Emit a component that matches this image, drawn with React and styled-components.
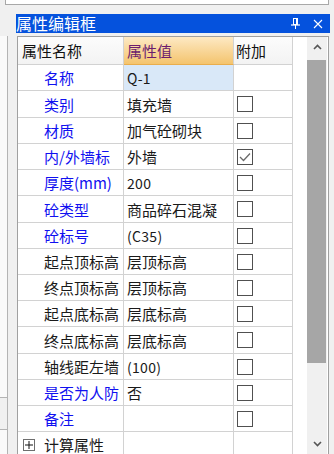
import React from 'react';
import styled, { createGlobalStyle } from 'styled-components';

const Global = createGlobalStyle`
  html, body { margin: 0; padding: 0; background: #f0f0f0; }
  body { font-family: "Noto Sans CJK SC", "Noto Sans", sans-serif; }
`;

const Page = styled.div`
  width: 334px;
  height: 454px;
  overflow: hidden;
  background: #f0f0f0;
  display: flex;
  flex-direction: column;
`;

const TopStrip = styled.div`
  margin-left: 5px;
  width: 322px;
  height: 4px;
  background: #fff;
  border: 1px solid #a8a8a8;
  border-top: none;
  flex: none;
`;

const TitleBar = styled.div`
  margin: 9px 0 0 16px;
  width: 314px;
  height: 19px;
  background: #0552dd;
  color: #fff;
  display: flex;
  align-items: center;
  flex: none;
`;

const TitleText = styled.span`
  font-size: 16px;
  line-height: 19px;
  flex: 1;
`;

const TitleIcon = styled.svg`
  display: block;
  margin-right: ${p => p.$mr}px;
`;

const ContentRow = styled.div`
  margin-top: 3px;
  display: flex;
  flex: none;
`;

const LeftStub = styled.div`
  width: 7px;
  height: 418px;
  border-right: 1px solid #b4b4b4;
  display: flex;
  flex-direction: column;
`;

const StubPart = styled.div`
  height: ${p => p.$h}px;
  background: ${p => (p.$grey ? '#f0f0f0' : '#fafafa')};
  border-bottom: ${p => (p.$line ? '1px solid #b4b4b4' : 'none')};
  flex: none;
`;

const GridBox = styled.div`
  margin-left: 9px;
  width: 310px;
  height: 417px;
  border: 1px solid #a0a0a0;
  border-bottom: none;
  background: #fff;
  display: flex;
  overflow: hidden;
`;

const Table = styled.div`
  width: 275px;
  display: grid;
  grid-template-columns: 106px 110px 59px;
  align-content: start;
  flex: none;
`;

const Filler = styled.div`
  width: 14px;
  flex: none;
`;

const Cell = styled.div`
  height: ${p => p.$h}px;
  box-sizing: border-box;
  border-right: 1px solid #d2d2d2;
  border-bottom: 1px solid #d2d2d2;
  display: flex;
  align-items: center;
  overflow: hidden;
  white-space: nowrap;
  font-size: 15px;
  background: ${p => (p.$sel ? '#d9e8f8' : '#fff')};
`;

const HeadCell = styled(Cell)`
  background: ${p => (p.$active ? 'linear-gradient(#fde9c4, #f4c46e)' : 'linear-gradient(#fcfcfc, #f3f3f3)')};
  border-bottom: 1px solid ${p => (p.$active ? '#e9ad4d' : '#d2d2d2')};
  color: ${p => (p.$active ? '#6c1d6e' : '#111')};
  padding-left: ${p => p.$pl}px;
`;

const NameCell = styled(Cell)`
  padding-left: ${p => (p.$group ? 5 : 26)}px;
  color: ${p => (p.$blue ? '#1010f0' : '#1a1a1a')};
`;

const ValueCell = styled(Cell)`
  padding-left: 3px;
  color: #1a1a1a;
  font-size: ${p => (p.$latin ? 14 : 15)}px;
  letter-spacing: ${p => (p.$latin ? 0.3 : 0)}px;
`;

const AddCell = styled(Cell)`
  padding-left: 3px;
`;

const CheckBox = styled.div`
  width: 16px;
  height: 16px;
  box-sizing: border-box;
  border: 1px solid #505050;
  background: #fff;
  display: flex;
  align-items: center;
  justify-content: center;
`;

const Expander = styled.div`
  width: 12px;
  height: 12px;
  box-sizing: border-box;
  border: 1px solid #6e6e6e;
  background: #fff;
  margin-right: 9px;
  display: flex;
  align-items: center;
  justify-content: center;
`;

const Scrollbar = styled.div`
  width: 20px;
  background: #f0f0f0;
  display: flex;
  flex-direction: column;
  flex: none;
`;

const ArrowBox = styled.div`
  height: 20px;
  display: flex;
  align-items: center;
  justify-content: center;
  flex: none;
`;

const Thumb = styled.div`
  margin-top: 3px;
  width: 19px;
  height: ${p => p.$h}px;
  background: #a6a6a6;
  flex: none;
`;

const Spacer = styled.div`
  flex: 1;
`;

const rows = [
  { name: '名称', blue: true, value: 'Q-1', latin: true, sel: true, check: null, h: 26 },
  { name: '类别', blue: true, value: '填充墙', check: false, h: 27 },
  { name: '材质', blue: true, value: '加气砼砌块', check: false, h: 26 },
  { name: '内/外墙标', blue: true, value: '外墙', check: true, h: 26 },
  { name: '厚度(mm)', blue: true, value: '200', latin: true, check: false, h: 26 },
  { name: '砼类型', blue: true, value: '商品碎石混凝', check: false, h: 27 },
  { name: '砼标号', blue: true, value: '(C35)', latin: true, check: false, h: 26 },
  { name: '起点顶标高', value: '层顶标高', check: false, h: 26 },
  { name: '终点顶标高', value: '层顶标高', check: false, h: 26 },
  { name: '起点底标高', value: '层底标高', check: false, h: 26 },
  { name: '终点底标高', value: '层底标高', check: false, h: 27 },
  { name: '轴线距左墙', value: '(100)', latin: true, check: false, h: 26 },
  { name: '是否为人防', blue: true, value: '否', check: false, h: 26 },
  { name: '备注', blue: true, value: '', check: false, h: 26 },
  { name: '计算属性', group: true, value: '', check: null, h: 26 },
];

const Check = ({ checked }) => (
  <CheckBox>
    {checked && (
      <svg width="12" height="10" viewBox="0 0 12 10">
        <polyline points="1,5 4.5,8.5 11,1.5" fill="none" stroke="#6a6a6a" strokeWidth="1.3" />
      </svg>
    )}
  </CheckBox>
);

export default function App() {
  return (
    <Page>
      <Global />
      <TopStrip />
      <TitleBar>
        <TitleText>属性编辑框</TitleText>
        <TitleIcon $mr={13} width="9" height="11" viewBox="0 0 9 11">
          <rect x="2.5" y="0.5" width="4" height="6" fill="none" stroke="#fff" strokeWidth="1" />
          <rect x="5" y="1" width="1.5" height="5.5" fill="#fff" />
          <line x1="0" y1="7" x2="9" y2="7" stroke="#fff" strokeWidth="1.2" />
          <line x1="4.5" y1="7" x2="4.5" y2="11" stroke="#fff" strokeWidth="1" />
        </TitleIcon>
        <TitleIcon $mr={7} width="10" height="10" viewBox="0 0 10 10">
          <path d="M1 1 L9 9 M9 1 L1 9" stroke="#fff" strokeWidth="1.1" fill="none" />
        </TitleIcon>
      </TitleBar>
      <ContentRow>
        <LeftStub>
          <StubPart $h={361} $line />
          <StubPart $h={31} $grey $line />
          <StubPart $h={24} />
        </LeftStub>
        <GridBox>
          <Table>
            <HeadCell $h={28} $pl={4}>属性名称</HeadCell>
            <HeadCell $h={28} $pl={3} $active>属性值</HeadCell>
            <HeadCell $h={28} $pl={2}>附加</HeadCell>
            {rows.map((r, i) => (
              <React.Fragment key={i}>
                <NameCell $h={r.h} $blue={r.blue} $group={r.group}>
                  {r.group && (
                    <Expander>
                      <svg width="8" height="8" viewBox="0 0 8 8">
                        <path d="M0 4 H8 M4 0 V8" stroke="#111" strokeWidth="1" />
                      </svg>
                    </Expander>
                  )}
                  {r.name}
                </NameCell>
                <ValueCell $h={r.h} $sel={r.sel} $latin={r.latin}>{r.value}</ValueCell>
                <AddCell $h={r.h}>{r.check !== null && <Check checked={r.check} />}</AddCell>
              </React.Fragment>
            ))}
          </Table>
          <Filler />
          <Scrollbar>
            <ArrowBox>
              <svg width="9" height="6" viewBox="0 0 9 6">
                <polyline points="1,5 4.5,1.5 8,5" fill="none" stroke="#555" strokeWidth="1.6" />
              </svg>
            </ArrowBox>
            <Thumb $h={303} />
            <Spacer />
            <ArrowBox>
              <svg width="9" height="6" viewBox="0 0 9 6">
                <polyline points="1,1 4.5,4.5 8,1" fill="none" stroke="#555" strokeWidth="1.6" />
              </svg>
            </ArrowBox>
          </Scrollbar>
        </GridBox>
      </ContentRow>
    </Page>
  );
}
